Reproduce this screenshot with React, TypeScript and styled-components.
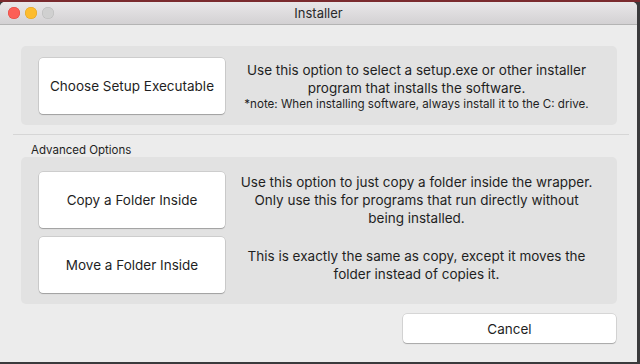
import styled, { createGlobalStyle } from "styled-components";

const GlobalStyle = createGlobalStyle`
    html, body {
        margin: 0;
        padding: 0;
        background: #3a3a3c;
        font-family: Inter, "Liberation Sans", sans-serif;
    }
`;

const Desktop = styled.div`
    width: 640px;
    height: 364px;
    padding: 2px 3px 2px 0;
    box-sizing: border-box;
    background: linear-gradient(#7a2a2e 0 2px, #3a3a3c 2px);
`;

const Window = styled.div`
    display: flex;
    flex-direction: column;
    height: 100%;
    background: #ececec;
    border-radius: 5px 5px 0 0;
    overflow: hidden;
`;

const TitleBar = styled.div`
    position: relative;
    display: flex;
    align-items: center;
    justify-content: center;
    height: 22px;
    flex-shrink: 0;
    background: linear-gradient(#e9e7e9, #d3d1d3);
    border-bottom: 1px solid #b4b4b4;
    font-size: 13px;
    color: #2a2a2a;
`;

const Lights = styled.div`
    position: absolute;
    left: 8px;
    top: 5px;
    display: flex;
    gap: 5px;
`;

const Light = styled.span<{ $fill: string; $edge: string }>`
    width: 12px;
    height: 12px;
    border-radius: 50%;
    background: ${(p) => p.$fill};
    box-shadow: inset 0 0 0 0.5px ${(p) => p.$edge};
`;

const Content = styled.div`
    display: flex;
    flex-direction: column;
    flex: 1;
    padding: 21px 20px 0 21px;
`;

const GroupBox = styled.div<{ $pad: string }>`
    display: flex;
    flex-direction: column;
    gap: 9px;
    padding: ${(p) => p.$pad};
    background: #e2e2e2;
    border-radius: 5px;
`;

const OptionRow = styled.div`
    display: flex;
    align-items: center;
`;

const OptionButton = styled.button`
    width: 186px;
    height: 56px;
    flex-shrink: 0;
    background: #ffffff;
    border: none;
    border-radius: 4px;
    box-shadow: 0 0 0 0.5px rgba(0, 0, 0, 0.18), 0 1px 1px rgba(0, 0, 0, 0.22);
    font-family: inherit;
    font-size: 13.5px;
    color: #1f1f1f;
`;

const Description = styled.div`
    flex: 1;
    padding: 0 21px 0 12px;
    text-align: center;
    font-size: 13.5px;
    line-height: 18px;
    color: #1f1f1f;
`;

const Note = styled.div`
    font-size: 11.6px;
    line-height: 14px;
`;

const Separator = styled.hr`
    margin: 9px -12px 0 -8px;
    border: none;
    border-top: 1px solid #d6d6d6;
`;

const SectionLabel = styled.div`
    margin: 8px 0 0 10px;
    font-size: 11.5px;
    line-height: 14px;
    color: #1f1f1f;
`;

const Footer = styled.div`
    display: flex;
    justify-content: flex-end;
    padding: 10px 1px 0 0;
`;

const CancelButton = styled(OptionButton)`
    width: 213px;
    height: 29px;
`;

export default function App() {
    return (
        <>
            <GlobalStyle />
            <Desktop>
                <Window>
                    <TitleBar>
                        <Lights>
                            <Light $fill="#fc5f57" $edge="#e0443e" />
                            <Light $fill="#fdbc2e" $edge="#dea123" />
                            <Light $fill="#d0d0d0" $edge="#b8b8b8" />
                        </Lights>
                        Installer
                    </TitleBar>
                    <Content>
                        <GroupBox $pad="12px 0 11px 18px">
                            <OptionRow>
                                <OptionButton>Choose Setup Executable</OptionButton>
                                <Description>
                                    Use this option to select a setup.exe or other installer program that installs the software.
                                    <Note>*note: When installing software, always install it to the C: drive.</Note>
                                </Description>
                            </OptionRow>
                        </GroupBox>
                        <Separator />
                        <SectionLabel>Advanced Options</SectionLabel>
                        <GroupBox $pad="15px 0 11px 18px">
                            <OptionRow>
                                <OptionButton>Copy a Folder Inside</OptionButton>
                                <Description>
                                    Use this option to just copy a folder inside the wrapper. Only use this for programs that run directly without being installed.
                                </Description>
                            </OptionRow>
                            <OptionRow>
                                <OptionButton>Move a Folder Inside</OptionButton>
                                <Description>
                                    This is exactly the same as copy, except it moves the folder instead of copies it.
                                </Description>
                            </OptionRow>
                        </GroupBox>
                        <Footer>
                            <CancelButton>Cancel</CancelButton>
                        </Footer>
                    </Content>
                </Window>
            </Desktop>
        </>
    );
}
